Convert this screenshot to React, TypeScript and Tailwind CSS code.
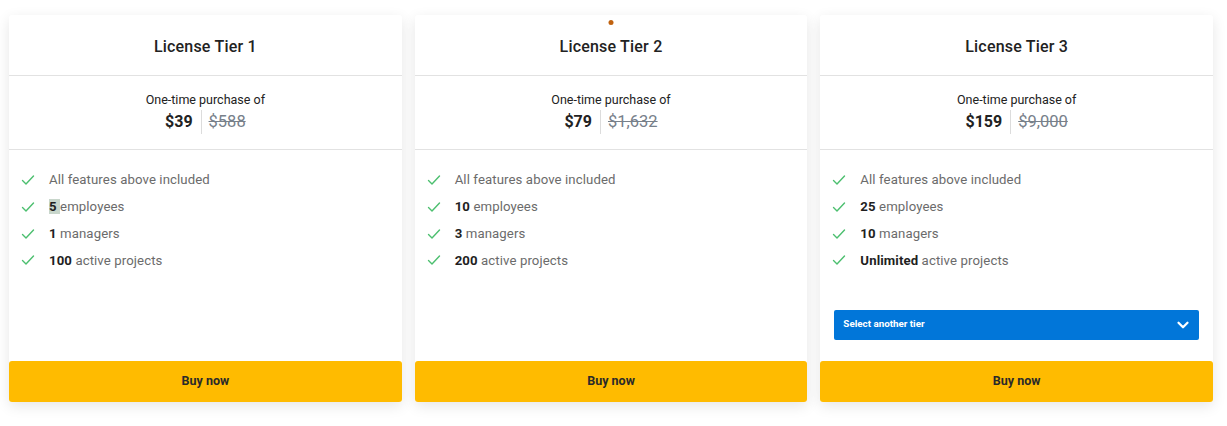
import { ChevronDown } from "lucide-react";

type Tier = {
  name: string;
  price: string;
  oldPrice: string;
  employees: string;
  managers: string;
  projects: string;
  select?: boolean;
  dot?: boolean;
  highlight?: boolean;
};

const tiers: Tier[] = [
  { name: "License Tier 1", price: "$39", oldPrice: "$588", employees: "5", managers: "1", projects: "100", highlight: true },
  { name: "License Tier 2", price: "$79", oldPrice: "$1,632", employees: "10", managers: "3", projects: "200", dot: true },
  { name: "License Tier 3", price: "$159", oldPrice: "$9,000", employees: "25", managers: "10", projects: "Unlimited", select: true },
];

function Check() {
  return (
    <svg width="14" height="14" viewBox="0 0 14 14" fill="none" className="shrink-0">
      <path d="M1.5 7.5 L5 11 L12.5 3" stroke="#4cbf6f" strokeWidth="1.4" strokeLinecap="round" strokeLinejoin="round" />
    </svg>
  );
}

function Feature({ strong, rest, highlight }: { strong?: string; rest: string; highlight?: boolean }) {
  return (
    <li className="flex items-center h-[26.7px]">
      <div className="w-[40px] pl-[12px] flex items-center">
        <Check />
      </div>
      <span className="text-[13.2px] text-[#6b6b6b] tracking-[0.1px]">
        {strong && (
          <span className={`font-bold text-[#1f1f1f] ${highlight ? "bg-[#c8d6cb]" : ""}`}>{strong}</span>
        )}
        {strong && (highlight ? <span className="bg-[#c8d6cb]"> </span> : " ")}
        {rest}
      </span>
    </li>
  );
}

export default function App() {
  return (
    <div
      className="w-[1227px] h-[426px] bg-white pl-[9px] pr-[14px] pt-[15px] flex gap-[13px]"
      style={{ fontFamily: "Roboto, 'Liberation Sans', sans-serif" }}
    >
      {tiers.map((t) => (
        <div
          key={t.name}
          className="relative flex-1 h-[387px] bg-white rounded-[3px] shadow-[0_4px_14px_rgba(0,0,0,0.10)] flex flex-col"
        >
          {t.dot && <div className="absolute top-[5px] left-1/2 -translate-x-1/2 w-[5px] h-[5px] rounded-full bg-[#c0620f]" />}
          <div className="h-[61px] flex items-center justify-center border-b border-[#e2e2e2]">
            <h2 className="text-[16px] font-medium text-[#222] tracking-[0.2px] pt-[3px]">{t.name}</h2>
          </div>
          <div className="h-[74px] flex flex-col items-center pt-[15px] border-b border-[#e2e2e2]">
            <div className="text-[12.5px] text-[#222] leading-[18px]">One-time purchase of</div>
            <div className="flex items-center mt-[1px]">
              <span className="text-[16px] font-bold text-[#222] pr-[8px]">{t.price}</span>
              <span className="w-px h-[24px] bg-[#dcdcdc]" />
              <span className="text-[16.5px] text-[#77808a] line-through pl-[7px]">{t.oldPrice}</span>
            </div>
          </div>
          <ul className="pt-[17px] flex flex-col">
            <Feature rest="All features above included" />
            <Feature strong={t.employees} rest="employees" highlight={t.highlight} />
            <Feature strong={t.managers} rest="managers" />
            <Feature strong={t.projects} rest="active projects" />
          </ul>
          <div className="flex-1 flex flex-col justify-start">
            {t.select && (
              <div className="mx-[14px] mt-[36px] h-[30px] rounded-[2px] bg-[#0176d9] flex items-center justify-between pl-[9px] pr-[7px]">
                <span className="text-[9.8px] font-bold text-white">Select another tier</span>
                <ChevronDown size={18} strokeWidth={3} className="text-white" />
              </div>
            )}
          </div>
          <button className="h-[41px] w-full rounded-[3px] bg-[#ffbb00] text-[12.5px] font-bold text-[#2a2a2a]">
            Buy now
          </button>
        </div>
      ))}
    </div>
  );
}
